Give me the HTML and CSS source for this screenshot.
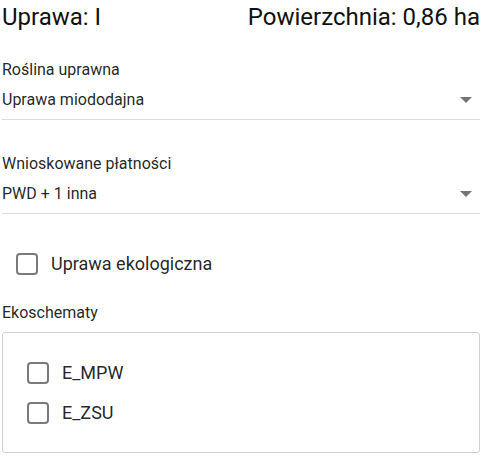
FILE: index.html
```html
<!DOCTYPE html>
<html lang="pl">
<head>
    <meta charset="UTF-8">
    <meta name="viewport" content="width=device-width, initial-scale=1.0">
    <title>Uprawa</title>
    <link rel="stylesheet" href="styles.css">
</head>
<body>
    <div class="panel">
        <div class="header">
            <span>Uprawa: I</span>
            <span>Powierzchnia: 0,86 ha</span>
        </div>

        <div class="field">
            <div class="field-label">Roślina uprawna</div>
            <div class="select">
                <span>Uprawa miododajna</span>
                <svg class="arrow" width="12" height="6" viewBox="0 0 12 6"><path d="M0 0h12L6 6z"/></svg>
            </div>
        </div>

        <div class="field">
            <div class="field-label">Wnioskowane płatności</div>
            <div class="select">
                <span>PWD + 1 inna</span>
                <svg class="arrow" width="12" height="6" viewBox="0 0 12 6"><path d="M0 0h12L6 6z"/></svg>
            </div>
        </div>

        <label class="check eco">
            <span class="box"></span>
            <span>Uprawa ekologiczna</span>
        </label>

        <div class="group-label">Ekoschematy</div>
        <div class="group">
            <label class="check">
                <span class="box"></span>
                <span>E_MPW</span>
            </label>
            <label class="check">
                <span class="box"></span>
                <span>E_ZSU</span>
            </label>
        </div>
    </div>
</body>
</html>
```

FILE: styles.css
```css
body {
    margin: 0;
    font-family: Roboto, "Noto Sans", sans-serif;
    color: rgba(0, 0, 0, 0.87);
    background-color: #fff;
}

.panel {
    width: 478px;
    margin-left: 2px;
    padding-top: 3px;
}

.header {
    display: flex;
    justify-content: space-between;
    font-size: 24px;
    line-height: 28px;
    color: #111;
}

.field {
    margin-top: 29px;
}

.field + .field {
    margin-top: 34px;
}

.field-label,
.group-label {
    font-size: 16px;
    line-height: 19px;
}

.select {
    display: flex;
    justify-content: space-between;
    align-items: center;
    margin-top: 11px;
    padding-bottom: 10px;
    border-bottom: 1px solid #dcdcdc;
    font-size: 16px;
    line-height: 19px;
}

.arrow {
    fill: #757575;
    margin-right: 8px;
}

.check {
    display: flex;
    align-items: center;
    gap: 13px;
    height: 24px;
    font-size: 18px;
    line-height: 22px;
}

.box {
    box-sizing: border-box;
    width: 22px;
    height: 22px;
    border: 2.5px solid #7a7a7a;
    border-radius: 4px;
}

.eco {
    margin-top: 38px;
    padding-left: 14px;
}

.group-label {
    margin-top: 27px;
}

.group {
    display: flex;
    flex-direction: column;
    gap: 16px;
    margin-top: 10px;
    padding: 28px 24px 27px;
    border: 1px solid #cfcfcf;
    border-radius: 3px;
}
```
